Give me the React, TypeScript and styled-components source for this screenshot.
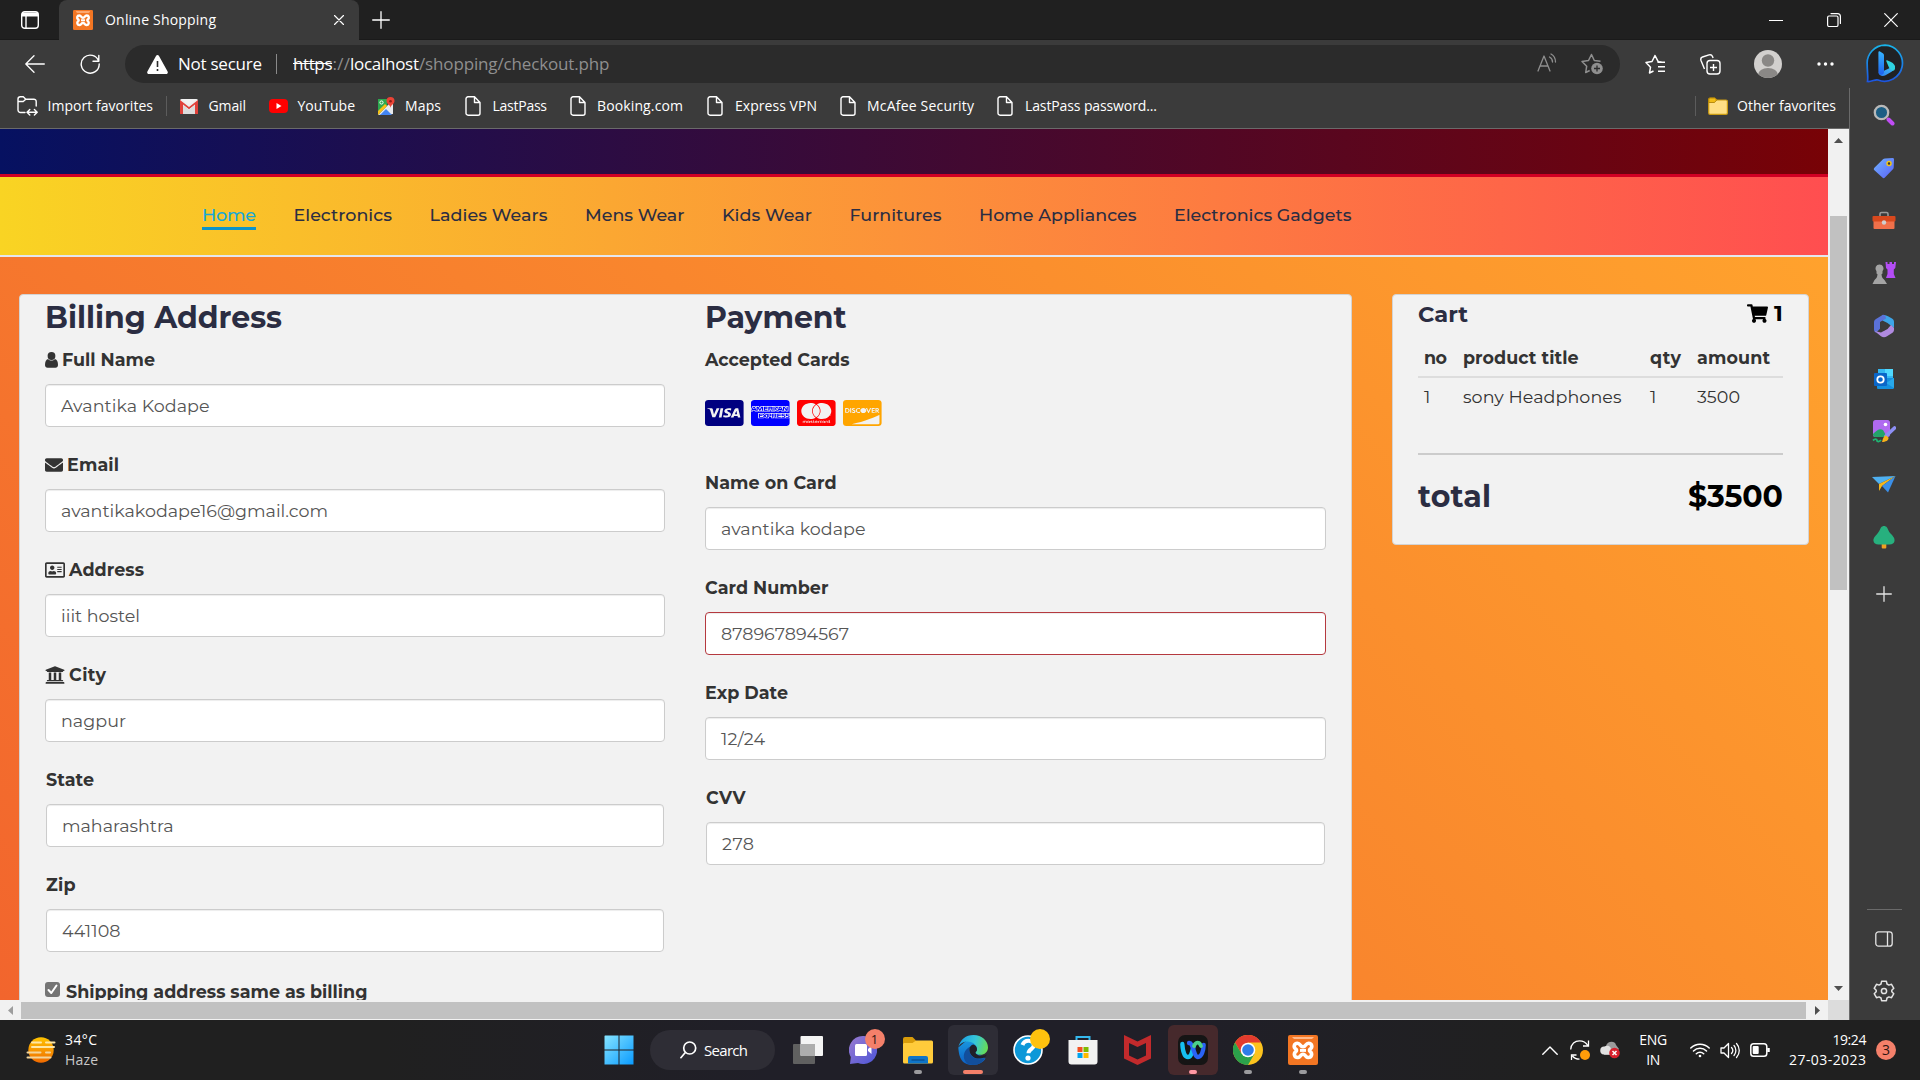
import React, { useLayoutEffect, useRef, useState } from "react";
import styled, { createGlobalStyle, css } from "styled-components";
import {
  FaCcVisa,
  FaCcAmex,
  FaCcMastercard,
  FaCcDiscover,
  FaEnvelope,
  FaRegAddressCard,
  FaUniversity,
  FaShoppingCart,
} from "react-icons/fa";

const ui = `"Segoe UI", "Open Sans", "Noto Sans", sans-serif`;
const site = `"Montserrat", Inter, "Liberation Sans", sans-serif`;

const Global = createGlobalStyle`
  *, *::before, *::after { box-sizing: border-box; }
  body { margin: 0; overflow: hidden; background: #202020; }
  svg { display: block; flex: none; }
`;

/* Text set to a given measure by tracking */
const Line = styled.span<{ $w: number }>`
  display: inline-block;
  width: ${(p) => p.$w}px;
  white-space: nowrap;
  flex: none;
`;

function Fit({ w, children }: { w: number; children: string }) {
  const ref = useRef<HTMLSpanElement>(null);
  const [tracking, setTracking] = useState(0);
  useLayoutEffect(() => {
    const range = document.createRange();
    range.selectNodeContents(ref.current!);
    const natural = range.getBoundingClientRect().width;
    setTracking((w - natural) / Math.max(1, children.length - 1));
  }, []);
  return (
    <Line ref={ref} $w={w} style={{ letterSpacing: tracking }}>
      {children}
    </Line>
  );
}

const Screen = styled.div`
  width: 1920px;
  height: 1080px;
  display: grid;
  grid-template-rows: 40px 48px 932px 60px;
  font-family: ${ui};
  color: #fff;
  background: #3b3b3b;
  overflow: hidden;
`;

/* ---------- title bar ---------- */
const TitleBar = styled.div`
  display: flex;
  align-items: center;
  background: #202020;
  box-shadow: inset 0 -1px 0 #1a1a1a;
`;
const Tab = styled.div`
  display: flex;
  align-items: center;
  width: 300px;
  height: 40px;
  margin-left: 20px;
  padding: 0 15px 0 14px;
  border-radius: 8px 8px 0 0;
  background: #3b3b3b;
  font-size: 14px;
  line-height: 20px;
`;
const TabTitle = styled.div`
  flex: 1;
  margin: 0 0 1px 12px;
`;
const LeadIcon = styled.div`
  margin-left: 21px;
`;
const NewTab = styled.div`
  margin-left: 13px;
`;
const WindowButtons = styled.div`
  display: flex;
  gap: 43.5px;
  margin-left: auto;
  padding-right: 22px;
`;

/* ---------- toolbar ---------- */
const Toolbar = styled.div`
  display: flex;
  align-items: center;
  padding: 0 15px 0 25px;
`;
const Address = styled.div`
  display: flex;
  align-items: center;
  width: 1495px;
  height: 38px;
  margin-left: 25px;
  padding: 0 17px 0 22px;
  border-radius: 19px;
  background: #2b2b2b;
  font-size: 17px;
  line-height: 24px;
`;
const Refresh = styled.div`
  margin-left: 35px;
`;
const NotSecure = styled.div`
  margin-left: 10px;
`;
const Rule = styled.div<{ $gap?: string; $tone?: string }>`
  width: 1px;
  height: 20px;
  margin: ${(p) => p.$gap || "0"};
  background: ${(p) => p.$tone || "#5c5c5c"};
`;
const Url = styled.div`
  display: flex;
  flex: 1;
  color: #8f8f8f;
`;
const Struck = styled.span`
  color: #fff;

  & > span {
    text-decoration: line-through;
  }
`;
const Host = styled.span`
  color: #fff;
`;
const AddressIcons = styled.div`
  display: flex;
  gap: 24px;
`;
const ToolIcons = styled.div`
  display: flex;
  align-items: center;
  flex: 1;
  margin-left: 25px;
`;
const Push = styled.div<{ $l: number }>`
  margin-left: ${(p) => p.$l}px;
`;

/* ---------- middle ---------- */
const Middle = styled.div`
  display: flex;
`;
const Content = styled.div`
  width: 1849px;
  display: grid;
  grid-template-rows: 41px 871px 20px;
`;
const Bookmarks = styled.div`
  display: flex;
  align-items: center;
  padding: 0 13px 4px 17px;
  border-bottom: 1px solid #6a6a6a;
  font-size: 14px;
  line-height: 20px;
`;
const Bookmark = styled.div<{ $ml?: number; $gap: number }>`
  display: flex;
  align-items: center;
  gap: ${(p) => p.$gap}px;
  margin-left: ${(p) => p.$ml || 0}px;
`;
const OtherFavorites = styled.div`
  display: flex;
  align-items: center;
  margin-left: auto;
`;

const Viewport = styled.div`
  display: flex;
`;
const Page = styled.div`
  width: 1828px;
  height: 871px;
  display: flex;
  flex-direction: column;
  overflow: hidden;
  font-family: ${site};
`;
const Masthead = styled.div`
  height: 48px;
  flex: none;
  border-bottom: 3px solid #d10024;
  background: linear-gradient(to right, #061161, #780206);
`;
const Nav = styled.nav`
  display: flex;
  gap: 37.5px;
  height: 80px;
  flex: none;
  padding: 24px 0 0 202px;
  border-bottom: 2px solid #e4e7ed;
  background: linear-gradient(to right, #f9d423, #ff4e50);
`;
const NavItem = styled.div<{ $active?: boolean }>`
  height: 29px;
  font-size: 17.5px;
  font-weight: 500;
  line-height: 28px;
  color: #2b2d42;
  ${(p) =>
    p.$active &&
    css`
      color: #15a8d8;
      border-bottom: 3px solid #0d94c8;
    `}
`;
const Section = styled.div`
  display: flex;
  flex: 1;
  align-items: flex-start;
  gap: 40px;
  min-height: 0;
  padding: 37px 19px 0;
  background: linear-gradient(45deg, #f2652d, #ffa22d);
`;
const Panel = styled.div`
  border: 1px solid #d3d3d3;
  border-radius: 4px;
  background: #f2f2f2;
  color: #333;
`;
const FormPanel = styled(Panel)`
  display: flex;
  gap: 40px;
  width: 1333px;
  height: 860px;
  padding: 2px 24px 0 25px;
`;
const Column = styled.div<{ $w: number }>`
  width: ${(p) => p.$w}px;
  flex: none;
`;
const Heading = styled.h3`
  height: 40px;
  margin: 0 0 11px;
  font-size: 30px;
  line-height: 42px;
  font-weight: 700;
  color: #2b2d42;
`;
const Field = styled.label<{ $inset?: boolean }>`
  display: block;
  height: 105px;
  padding: ${(p) => (p.$inset ? "0 1px" : "0")};
`;
const Label = styled.div<{ $gap?: number }>`
  display: flex;
  align-items: center;
  gap: ${(p) => p.$gap || 4}px;
  height: 24px;
  font-size: 17.5px;
  line-height: 24px;
  font-weight: 700;
`;
const Box = styled.div<{ $error?: boolean }>`
  height: 43px;
  margin-top: 12px;
  padding-left: 15px;
  border: 1px solid ${(p) => (p.$error ? "#b5393f" : "#ccc")};
  border-radius: 4px;
  background: #fff;
  box-shadow: inset 0 1px 1px rgba(0, 0, 0, 0.075);
  font-size: 17.5px;
  line-height: 42px;
  font-weight: 400;
  color: #555;
`;
const Brands = styled.div`
  display: flex;
  gap: 7.5px;
  height: 99px;
  padding-top: 28px;

  & > svg {
    width: 38.6px;
    height: 26px;
  }
`;
const SameAs = styled.div`
  display: flex;
  gap: 6px;
  font-size: 17.5px;
  line-height: 28px;
  font-weight: 700;
`;
const Check = styled.span`
  display: flex;
  width: 15px;
  height: 15px;
  margin-top: 4px;
  border-radius: 3px;
  background: #757575;
`;
const CartPanel = styled(Panel)`
  width: 417px;
  height: 251px;
  padding: 3px 25px 0;
`;
const CartHead = styled.div`
  display: flex;
  justify-content: space-between;
  height: 30px;
  margin-bottom: 12px;
  font-size: 22.5px;
  line-height: 32px;
  font-weight: 700;
  color: #2b2d42;
`;
const Count = styled.div`
  display: flex;
  align-items: center;
  gap: 6px;
  color: #000;
`;
const CartRow = styled.div<{ $head?: boolean }>`
  display: grid;
  grid-template-columns: 39px 187px 47px 1fr;
  padding-left: 6px;
  height: 38px;
  font-size: 17.5px;
  line-height: ${(p) => (p.$head ? 36 : 38)}px;
  font-weight: ${(p) => (p.$head ? 700 : 400)};
  ${(p) => p.$head && "border-bottom: 2px solid #ddd;"}
`;
const Total = styled.div`
  display: flex;
  justify-content: space-between;
  margin-top: 37px;
  padding-top: 21px;
  border-top: 2px solid #ccc;
  font-size: 30px;
  line-height: 42px;
  font-weight: 700;
  color: #2b2d42;
`;
const Price = styled.span`
  color: #000;
`;

const VScroll = styled.div`
  width: 21px;
  display: flex;
  flex-direction: column;
  align-items: center;
  padding: 9px 0 9px;
  background: #f1f1f1;
`;
const VThumb = styled.div`
  width: 17px;
  height: 374px;
  margin: 73px 0 auto;
  background: #c1c1c1;
`;
const HScroll = styled.div`
  display: flex;
  align-items: center;
  background: #f1f1f1;
  padding-left: 8px;
`;
const HThumb = styled.div`
  width: 1785px;
  height: 17px;
  margin: 1px 9px 0 8px;
  background: #c1c1c1;
`;
const Corner = styled.div`
  width: 21px;
  height: 20px;
  margin-left: auto;
  background: #dcdcdc;
`;
const SideBar = styled.aside`
  display: flex;
  flex-direction: column;
  align-items: center;
  width: 71px;
  padding: 1px 2px 18px 0;
  border-left: 1px solid #6a6a6a;
`;
const Slot = styled.div<{ $last?: boolean }>`
  display: grid;
  place-items: center;
  height: 52.7px;
  flex: none;
  margin-top: ${(p) => (p.$last ? 4 : 0)}px;
`;
const SideFoot = styled.div`
  display: flex;
  flex-direction: column;
  align-items: center;
  gap: 33px;
  width: 35px;
  margin-top: auto;
  padding-top: 21px;
  border-top: 1px solid #6a6a6a;
`;

/* ---------- taskbar ---------- */
const Taskbar = styled.div`
  display: grid;
  grid-template-columns: 591px 1fr 390px;
  background: linear-gradient(to right, #202020 20%, #201f28 40%, #201f28 62%, #202020 80%);
  font-size: 14px;
  line-height: 20px;
`;
const Weather = styled.div`
  display: flex;
  align-items: center;
  gap: 9px;
  padding-left: 26px;
`;
const Dim = styled.div`
  color: #c8c8c8;
`;
const Apps = styled.div`
  display: flex;
  align-items: center;
`;
const AppTile = styled.div<{ $bg?: string }>`
  position: relative;
  display: grid;
  place-items: center;
  width: 50px;
  height: 50px;
  margin: 0 2.5px;
  border-radius: 6px;
  background: ${(p) => p.$bg || "transparent"};
`;
const Dot = styled.span<{ $w: number; $c: string }>`
  position: absolute;
  bottom: 1px;
  left: 50%;
  width: ${(p) => p.$w}px;
  height: 4px;
  margin-left: ${(p) => -p.$w / 2}px;
  border-radius: 2px;
  background: ${(p) => p.$c};
`;
const Badge = styled.span<{ $c: string }>`
  position: absolute;
  top: 4px;
  right: 3px;
  width: 20px;
  height: 20px;
  border-radius: 50%;
  background: ${(p) => p.$c};
  color: #2a1512;
  font-size: 13px;
  line-height: 20px;
  text-align: center;
`;
const Search = styled.div`
  display: flex;
  align-items: center;
  gap: 7px;
  width: 125px;
  height: 40px;
  margin: 0 5px 0 4px;
  padding-left: 30px;
  border-radius: 20px;
  background: #2e2d35;
  font-size: 15px;
`;
const Tray = styled.div`
  display: flex;
  align-items: center;
  padding-left: 12px;
`;
const Stack = styled.div<{ $w: number; $align: string }>`
  width: ${(p) => p.$w}px;
  text-align: ${(p) => p.$align};
`;
const Notice = styled.div`
  width: 20px;
  height: 20px;
  margin-left: 10px;
  border-radius: 50%;
  background: #f4806a;
  color: #2a1512;
  text-align: center;
  line-height: 20px;
`;

/* ---------- icons ---------- */
const Stroke = ({ w, h, d, sw = 1.5, c = "#fff", vb }: { w: number; h: number; d: string; sw?: number; c?: string; vb?: string }) => (
  <svg width={w} height={h} viewBox={vb || `0 0 ${w} ${h}`} fill="none" stroke={c} strokeWidth={sw} strokeLinecap="round" strokeLinejoin="round">
    <path d={d} />
  </svg>
);

const Xampp = ({ s }: { s: number }) => (
  <svg width={s} height={s} viewBox="0 0 30 30">
    <rect width="30" height="30" rx="2" fill="#f37623" />
    <path d="M4 2h22l-2 2H6z" fill="#ffb98a" />
    <path
      d="M9.500 8.200c-3.500 0-4.500 4-1.500 6 .7.500.7 1.600 0 2.200-3 2.500-1.500 6.300 2 6.100 2.500-.2 2.500-3.200 5-3.200s2.500 3 5 3.200c3.500.2 5-3.600 2-6.100-.7-.6-.7-1.700 0-2.200 3-2 2-6-1.500-6-3 0-2.500 3.500-5.500 3.500s-2.500-3.500-5.500-3.500z"
      fill="none" stroke="#fff" strokeWidth="3.600" strokeLinejoin="round"
    />
    <path d="M12 15.400h6" stroke="#fff" strokeWidth="3" />
  </svg>
);
const PageIcon = () => <Stroke w={16} h={20} sw={1.4} d="M3 .8h6.500l5.500 5.700v10.700a2 2 0 0 1-2 2H3a2 2 0 0 1-2-2V2.800a2 2 0 0 1 2-2zM9.500 1v5.500H15" />;
const Gmail = () => (
  <svg width="18" height="15" viewBox="0 0 18 15">
    <rect width="18" height="15" rx="1.500" fill="#eee" />
    <path d="M0 15V1l9 7 9-7v14h-3V5.500l-6 4.800-6-4.800V15z" fill="#e0413a" />
    <path d="M3 15V6l6 4.800L15 6v9z" fill="#dcdcdc" />
    <path d="M1.500 0h15L9 5.800z" fill="#f2f2f2" />
  </svg>
);
const YouTube = () => (
  <svg width="19" height="14" viewBox="0 0 19 14">
    <rect width="19" height="14" rx="4" fill="#f00" />
    <path d="M7.500 4v6l5-3z" fill="#fff" />
  </svg>
);
const Maps = () => (
  <svg width="18" height="19" viewBox="0 0 18 19">
    <path d="M1 2h10l-1 7-9 9z" fill="#2da94f" />
    <path d="M1 18 16 3v14z" fill="#e8eaed" />
    <path d="M3 18l6-6 6 6z" fill="#4285f4" />
    <path d="M1 14v4l9-9-2-2z" fill="#fbc116" />
    <circle cx="4.500" cy="5.500" r="1.600" fill="none" stroke="#fff" />
    <path d="M13.500 11c0-3-4-4-4-7a4 4 0 0 1 8 0c0 3-4 4-4 7z" fill="#ea4335" />
    <circle cx="13.500" cy="4.200" r="1.300" fill="#8c1d18" />
  </svg>
);
const Folder = () => (
  <svg width="20" height="18" viewBox="0 0 20 18">
    <path d="M.7 2.500A1.500 1.500 0 0 1 2.200 1h4.300l2.200 2H18a1.400 1.400 0 0 1 1.400 1.400V16a1.300 1.300 0 0 1-1.300 1.300H2A1.300 1.300 0 0 1 .7 16z" fill="#ffdf85" stroke="#c99a12" strokeWidth="1.200" />
    <path d="M.8 5.500V2.500A1.400 1.400 0 0 1 2.200 1h4.300l2.200 2L6.500 5.500z" fill="#f2bd18" stroke="#a87b00" strokeWidth=".8" />
  </svg>
);
const Bing = () => (
  <svg width="38" height="40" viewBox="0 0 38 40">
    <defs>
      <linearGradient id="bo" x1="0" y1="0" x2="0" y2="1">
        <stop offset="0" stopColor="#18b4ea" />
        <stop offset="1" stopColor="#1d55e0" />
      </linearGradient>
      <linearGradient id="bb" x1="0" y1="0" x2="0" y2="1">
        <stop offset="0" stopColor="#35b4ff" />
        <stop offset="1" stopColor="#1f62ee" />
      </linearGradient>
      <linearGradient id="bc" x1="0" y1="1" x2="1" y2="0">
        <stop offset="0" stopColor="#2a7df5" />
        <stop offset="1" stopColor="#45c8f5" />
      </linearGradient>
    </defs>
    <path d="M19 1.200a18 18 0 1 1-7 34.800c-3-1-6 2-10.500 1.500.8-4-.3-9-.3-17A18 18 0 0 1 19 1.200z" fill="#202124" stroke="url(#bo)" strokeWidth="1.700" />
    <path d="M12.500 28.500c.3 3 4 4.300 7 2.700l6-3.500c2.500-1.600 3.500-3.700 3.500-6.200l-11.500 5.500z" fill="url(#bc)" />
    <path d="M21 16.200l3.500 1.600c3.500 1.600 5 4 4.500 7-.3 1.500-1.500 2.500-3 1.800L24.500 25c-.8-.4-1.200-.8-1.500-1.600l-2.600-6c-.3-.8 0-1.400.6-1.200z" fill="#2fd3e0" />
    <path d="M12.400 8.300c0-1.100.8-1.400 1.600-.9l2.800 1.900c.9.600 1.200 1.100 1.200 2.100V28c0 1.500-1.200 2.700-2.800 2.700s-2.800-1.200-2.800-2.700z" fill="url(#bb)" />
  </svg>
);
const Profile = () => (
  <svg width="28" height="28" viewBox="0 0 28 28">
    <clipPath id="pc"><circle cx="14" cy="14" r="14" /></clipPath>
    <g clipPath="url(#pc)">
      <rect width="28" height="28" fill="#d2d0ce" />
      <circle cx="14" cy="10.500" r="6.200" fill="#8a8886" />
      <ellipse cx="14" cy="25" rx="10" ry="7" fill="#8a8886" />
    </g>
  </svg>
);
const ReadAloud = () => <Stroke w={20} h={20} c="#8f8f8f" sw={1.300} d="M1 18 7 3l6 15M3.200 13h7.600M12.500 4c2 1 3 3 3 5M14 1c3.500 2 4.500 5 4.500 8" />;
const starD = "M16.500 8.200 13.200 7.700 10 1.500 7 7.500 1 8.500l4.500 4.700L4.500 19l4-2";
const AddStar = () => (
  <svg width="22" height="22" viewBox="0 0 22 22" fill="none" stroke="#8f8f8f" strokeWidth="1.500" strokeLinejoin="round">
    <path d="M19.500 8.200 13.300 7.500 10.500 1.500 7.500 7.500 1 8.500l4.700 4.700L4.700 19.500l4-2" />
    <circle cx="16" cy="15.500" r="5.800" fill="#8f8f8f" stroke="none" />
    <path d="M16 12.500v6M13 15.500h6" stroke="#2b2b2b" strokeWidth="1.300" />
  </svg>
);

const SearchEmoji = () => (
  <svg width="22" height="22" viewBox="0 0 22 22">
    <path d="m15.500 15.500 4 4" stroke="#c04df5" strokeWidth="4" strokeLinecap="round" />
    <circle cx="8.500" cy="8.500" r="6.700" fill="#1c5e84" stroke="#b9b9b9" strokeWidth="2.300" />
  </svg>
);
const Tag = () => (
  <svg width="22" height="22" viewBox="0 0 22 22">
    <defs><linearGradient id="tg" x1="0" y1="0" x2="1" y2="1"><stop offset="0" stopColor="#70b4ff" /><stop offset="1" stopColor="#5b60f5" /></linearGradient></defs>
    <path d="M12 1.500 19.500 1c1 0 1.500.5 1.500 1.500l-.3 8c0 .8-.3 1.300-.8 1.800l-8 8.300c-.8.800-1.700.800-2.500 0L1.400 13.300c-.8-.8-.8-1.800 0-2.600L10 2.300c.5-.5 1.200-.8 2-.8z" fill="url(#tg)" />
    <circle cx="16" cy="6.500" r="2" fill="#333" stroke="#f3c416" strokeWidth="1.500" />
  </svg>
);
const Toolbox = () => (
  <svg width="24" height="19" viewBox="0 0 24 19">
    <path d="M8 6V3c0-1 .5-1.500 1.500-1.500h5c1 0 1.500.5 1.500 1.500v3" fill="none" stroke="#999" strokeWidth="1.600" />
    <rect x="1.500" y="9" width="21" height="9" rx="1" fill="#f0704a" />
    <rect x=".5" y="5" width="23" height="5.500" rx="1" fill="#d8481d" />
    <circle cx="12" cy="11.500" r="2.200" fill="#cfcfcf" />
  </svg>
);
const Chess = () => (
  <svg width="24" height="24" viewBox="0 0 24 24">
    <path d="M13.500 1h2v2h2V1h2.500v2h2V1H24l-.7 6-1.500 1.500V13l1.700 4h-9.500l1.500-4V8.500L14 7z" fill="#b44df5" />
    <path d="M7.500 3.500a4 4 0 0 1 3 6.700v2.300l-1 .8c.3 3 1 4.200 3 5.700L15 23H.5l2-4c2-1.500 2.700-2.700 3-5.700l-1-.8v-2.300a4 4 0 0 1 3-6.700z" fill="#a4a4a4" />
  </svg>
);
const M365 = () => (
  <svg width="22" height="24" viewBox="0 0 22 24">
    <path d="M9 1.500C11 .3 13 1 15 2.200l4 2.300c1.500 1 2 2 2 3.500v6L14.500 9l-5-2.500z" fill="#3da5e8" />
    <path d="M9.500 1 3 5C1.500 6 1 7 1 8.500v7c0 1.500.8 2.500 2 3.200l4-4V8l6-3.500C13 2 11 .2 9.500 1z" fill="#5b72d8" />
    <path d="M1.500 17 8 22.200c2 1.300 4 1.300 6 0l5.500-3.500c1.300-1 1.700-2 1.500-4.700l-3-3-3.500 4-6.500 3.500z" fill="#b08ae0" />
    <path d="m11 8 3.700 2v4.300L11 16.500l-3.700-2.200V10z" fill="#3b3b3b" />
  </svg>
);
const Outlook = () => (
  <svg width="22" height="22" viewBox="0 0 22 22">
    <rect x="5" y="1" width="15" height="14" fill="#35b8f1" />
    <path d="M12 1h8v7h-8z" fill="#50d9ff" />
    <path d="M4 10h17v9.500c0 .8-.5 1.500-1.300 1.500H5.300c-.8 0-1.300-.5-1.300-1.500z" fill="#1490df" />
    <path d="M21 10v10l-8-5z" fill="#28a8ea" />
    <rect x="1" y="5" width="13" height="13" rx="1" fill="#0a66c8" />
    <circle cx="7.500" cy="11.500" r="3.200" fill="none" stroke="#fff" strokeWidth="1.800" />
  </svg>
);
const Designer = () => (
  <svg width="24" height="24" viewBox="0 0 24 24">
    <rect x="1" y="1" width="17" height="17" rx="2.500" fill="#b06af0" />
    <path d="M1 15c4-4 7-6 10-4l4 7H3.500A2.500 2.500 0 0 1 1 16z" fill="#23a36a" />
    <circle cx="13.500" cy="5.500" r="1.800" fill="#fff" />
    <path d="M14 17 22.500 9" stroke="#8d8ff5" strokeWidth="3.600" strokeLinecap="round" />
    <path d="M10 23c1-3 1.500-6 4-6.500l2.500 2c.5 3-3 4.500-6.500 4.500z" fill="#f7b11b" />
    <path d="M1 21.500c2-2 4-1.500 4 0s2.500 1.500 4-.5" fill="none" stroke="#1fb573" strokeWidth="1.800" />
  </svg>
);
const Plane = () => (
  <svg width="24" height="18" viewBox="0 0 24 18">
    <path d="M0 2 23.500 1 7 9z" fill="#4fb0f0" />
    <path d="M7 9 23.500 1 10 11l-3 5z" fill="#f5b71c" />
    <path d="M10 11 23.500 1 16 17.500z" fill="#3b8fe8" />
  </svg>
);
const Tree = () => (
  <svg width="22" height="24" viewBox="0 0 22 24">
    <rect x="8.700" y="18" width="4.600" height="5.500" rx="1" fill="#f0a020" />
    <path d="M8 2.500c1.500-2 4.500-2 6 0 1 1.500 1.500 4 3.500 6S22 13 21.500 16c-.3 2-2 3.500-5 3.500h-11c-3 0-4.700-1.500-5-3.500C0 13 2.500 11 4.500 8.500s2.500-4.500 3.500-6z" fill="#27b07e" />
  </svg>
);
const Gear = () => (
  <svg width="22" height="22" viewBox="0 0 22 22" fill="none" stroke="#e4e4e4" strokeWidth="1.500" strokeLinejoin="round">
    <path d="M8.600 1.300h4.800l.6 2.700 1.900 1.100 2.600-.8 2.300 4-2 1.900v1.600l2 1.900-2.300 4-2.600-.8L14 18l-.6 2.700H8.600L8 18l-1.900-1.100-2.600.8-2.300-4 2-1.900v-1.600l-2-1.900 2.300-4 2.600.8L8 4z" />
    <circle cx="11" cy="11" r="2.600" />
  </svg>
);
const Edge = () => (
  <svg width="30" height="30" viewBox="0 0 30 30">
    <defs>
      <linearGradient id="e1" x1="0" y1=".3" x2="1" y2=".5"><stop offset="0" stopColor="#1a9fe8" /><stop offset=".55" stopColor="#36c6d8" /><stop offset="1" stopColor="#66dd56" /></linearGradient>
      <linearGradient id="e2" x1="0" y1="0" x2="0" y2="1"><stop offset="0" stopColor="#1b9de2" /><stop offset="1" stopColor="#0c5fc4" /></linearGradient>
    </defs>
    <path d="M.3 12.500C1 20 2 30 15 30c6 0 10.500-3 12.500-6.500L17.500 17l4-8-10-6z" fill="url(#e2)" />
    <path d="M.3 12.500C2 4.500 8 0 15.500 0 24 0 30 6 30 12.500c0 4.500-3.500 7.300-7.500 7.300-3.200 0-5.200-1.200-5-2.300.2-.7 1.500-1.200 1.500-3.500C19 9.500 14 6.500 9.500 6.500 5 6.500 1.500 9 .3 12.500z" fill="url(#e1)" />
    <path d="M11 29.500C6 27 4.500 21 7 16.500c1-2 3-4 5.500-5-1.500 2-1.500 5 0 8 2.500 4.500 9 6 14.800 3.300C25 27 21 30 15 30c-1.500 0-2.700-.2-4-.5z" fill="#124f9c" />
    <path d="M17.500 17.500c.2-.7 1.500-1.200 1.500-3.500a5 5 0 0 0-3.500-4.500c-3 .5-4.500 3.500-4 6.500.5 4 4 7 8 7.500 3 .2 5.500-.3 7.700-1.500l1.800-2.500c-4 2.300-11.500 1-11.500-2z" fill="#201f28" />
  </svg>
);
const Chrome = () => (
  <svg width="30" height="30" viewBox="0 0 30 30">
    <circle cx="15" cy="15" r="15" fill="#fcc31e" />
    <path d="M2 7.500A15 15 0 0 1 28 7.500H15L8.500 18.800z" fill="#e33b2e" />
    <path d="M2 7.500A15 15 0 0 0 15 30l6.500-11.200H8.500z" fill="#2ba14b" />
    <circle cx="15" cy="15" r="7.300" fill="#fff" />
    <circle cx="15" cy="15" r="5.800" fill="#2f7de9" />
  </svg>
);
const Explorer = () => (
  <svg width="30" height="27" viewBox="0 0 30 27">
    <path d="M0 2a2 2 0 0 1 2-2h7.500l3.500 3.500V9H0z" fill="#d99c0a" />
    <path d="M1 6h8.500L13 3.500h15.500A1.500 1.500 0 0 1 30 5v20a1.500 1.500 0 0 1-1.500 1.500h-27A1.500 1.500 0 0 1 0 25V7z" fill="#ffcb3b" />
    <path d="M5 26.500V21a2 2 0 0 1 2-2h16a2 2 0 0 1 2 2v5.500z" fill="#0f75c8" />
    <path d="M8.500 23h13" stroke="#0a4e8d" strokeWidth="1.300" />
  </svg>
);
const Store = () => (
  <svg width="30" height="30" viewBox="0 0 30 30">
    <path d="M8.500 7V2h13v5" fill="none" stroke="#35b9ee" strokeWidth="2" />
    <path d="M.5 5h29v21.500a3 3 0 0 1-3 3h-23a3 3 0 0 1-3-3z" fill="#f2f2f2" />
    <path d="M9.500 12h5v5h-5z" fill="#f25022" /><path d="M15.500 12h5v5h-5z" fill="#7fba00" />
    <path d="M9.500 18h5v5h-5z" fill="#00a4ef" /><path d="M15.500 18h5v5h-5z" fill="#ffb900" />
  </svg>
);
const Mcafee = () => (
  <svg width="27" height="30" viewBox="0 0 27 30">
    <path d="m0 0 13.500 6.500L27 0v23.500L13.500 30 0 23.500zm5 8v12.500l8.500 4 8.500-4V8l-8.500 4z" fill="#c22a2c" fillRule="evenodd" />
  </svg>
);
const Webex = () => (
  <svg width="30" height="30" viewBox="0 0 30 30" fill="none">
    <rect width="30" height="30" rx="7" fill="#151515" />
    <path d="M4.300 9c.5 8 2.500 13 5.700 13 3.500 0 4-6 5.500-10" stroke="#16bff0" strokeWidth="4.300" strokeLinecap="round" />
    <path d="M11 8c4.500-.5 4.500 14 9 14 3.500 0 5.500-6 5.700-12" stroke="#2a63f5" strokeWidth="4.300" strokeLinecap="round" />
    <path d="M16 11c1-2.500 3-4 5-3 1.200.7 1.500 2 2 3" stroke="#4bd08a" strokeWidth="3.800" strokeLinecap="round" />
  </svg>
);
const Windows = () => (
  <svg width="30" height="30" viewBox="0 0 30 30">
    <defs><linearGradient id="wn" x1="0" y1="0" x2="1" y2="1"><stop offset="0" stopColor="#86e4ff" /><stop offset="1" stopColor="#0a9bff" /></linearGradient></defs>
    <path d="M1 .5h13.500v14H.5V1zM15.500.5h14v14h-14zM.5 15.500h14v14H.5zM15.500 15.500h14v14h-14z" fill="url(#wn)" />
  </svg>
);
const TaskView = () => (
  <svg width="30" height="28" viewBox="0 0 30 28">
    <rect y="8" width="22" height="20" rx="1" fill="#606060" />
    <rect x="7.500" width="22.500" height="20" rx="1" fill="#f4f4f4" />
    <path d="M7.500 8H22v12H8.500a1 1 0 0 1-1-1z" fill="#adadad" />
  </svg>
);
const Chat = () => (
  <svg width="28" height="28" viewBox="0 0 28 28">
    <defs><linearGradient id="ch" x1="0" y1="0" x2="1" y2="1"><stop offset="0" stopColor="#9a7bd0" /><stop offset="1" stopColor="#4c55d8" /></linearGradient></defs>
    <path d="M14 0a14 14 0 1 1-5 27L1 28l.8-7A14 14 0 0 1 14 0z" fill="url(#ch)" />
    <rect x="6" y="8" width="12" height="12" rx="1.500" fill="#fff" />
    <path d="m19 13 3.500-3v8L19 15z" fill="#fff" />
  </svg>
);
const HelpIcon = () => (
  <svg width="30" height="30" viewBox="0 0 30 30" fill="none">
    <circle cx="15" cy="15" r="14" fill="#0d98d8" stroke="#fff" strokeWidth="1.600" />
    <path d="M9.500 10c1-3 3-4.200 6-4.200 3.200 0 5.300 1.700 5.300 4.500 0 4-5.300 3.700-5.300 8" stroke="#fff" strokeWidth="4" />
    <circle cx="15" cy="23" r="2.600" fill="#fff" />
  </svg>
);
const Haze = () => (
  <svg width="30" height="30" viewBox="0 0 30 30" strokeLinecap="round">
    <defs><linearGradient id="hz" x1="0" y1="0" x2="0" y2="1"><stop offset="0" stopColor="#ffc400" /><stop offset="1" stopColor="#f06a00" /></linearGradient></defs>
    <circle cx="15" cy="15" r="12.700" fill="url(#hz)" />
    <path d="M6 7.500h9M20 7.500h8.500M6 12h22" stroke="#ffe7a3" strokeWidth="2" />
    <path d="M1.500 17.500h13M20 17.500h4M1.500 22.500h23" stroke="#f3d49a" strokeWidth="2" />
  </svg>
);
const Sync = () => (
  <svg width="20" height="20" viewBox="0 0 20 20" fill="none" stroke="#fff" strokeWidth="1.300">
    <path d="M.7 9.500C1 4 5 .8 9.500.8c4 0 6.500 1.700 8.300 4.700M18.500.5v5.500H13M1.500 20v-5h5M2.500 16c1.500 2 3.500 3.200 7 3.200" />
    <circle cx="15" cy="15" r="5" fill="#ff9d0a" stroke="none" />
  </svg>
);
const CloudError = () => (
  <svg width="20" height="18" viewBox="0 0 20 18">
    <path d="M6 5c1-5 9-6 10-1l3 4-6 6H4z" fill="#9b9b9b" />
    <path d="M4 13.500a4 4 0 0 1 .5-8c2-1.500 5-1 6 1l2 7z" fill="#e2e2e2" />
    <circle cx="14.500" cy="12" r="5.300" fill="#d8202c" />
    <path d="m12.500 10 4 4m0-4-4 4" stroke="#fff" strokeWidth="1.500" />
  </svg>
);
const Battery = () => (
  <svg width="20" height="14" viewBox="0 0 20 14" fill="none">
    <rect x=".8" y=".8" width="16" height="12.400" rx="2.800" stroke="#fff" strokeWidth="1.500" />
    <rect x="2.700" y="3" width="6" height="8" rx="1" fill="#fff" />
    <path d="M18.500 5v4" stroke="#fff" strokeWidth="2.500" />
  </svg>
);
const Person = () => (
  <svg width="13" height="16" viewBox="0 0 13 16" fill="#333">
    <circle cx="6.500" cy="4" r="3.900" />
    <path d="M3 7c2 2 5 2 7 0 2 .3 3 3 3 6 0 1.500-1 2.700-2.500 2.700h-8C1 15.700 0 14.500 0 13c0-3 1-5.700 3-6z" />
  </svg>
);
const cardBox = { viewBox: "0 32 576 448", preserveAspectRatio: "none" };

interface FieldProps { label: string; lw: number; value: string; vw: number; icon?: React.ReactNode; gap?: number; inset?: boolean; error?: boolean }
const TextField = ({ label, lw, value, vw, icon, gap, inset, error }: FieldProps) => (
  <Field $inset={inset}>
    <Label $gap={gap}>{icon}<Fit w={lw}>{label}</Fit></Label>
    <Box $error={error}><Fit w={vw}>{value}</Fit></Box>
  </Field>
);

const navItems: [string, number][] = [
  ["Home", 54], ["Electronics", 98.500], ["Ladies Wears", 118], ["Mens Wear", 99.500], ["Kids Wear", 90],
  ["Furnitures", 92], ["Home Appliances", 157.500], ["Electronics Gadgets", 177.500],
];
const sideIcons = [SearchEmoji, Tag, Toolbox, Chess, M365, Outlook, Designer, Plane, Tree];

export default function App() {
  return (
    <Screen>
      <Global />
      <TitleBar>
        <LeadIcon>
          <svg width="18" height="18" viewBox="0 0 18 18" fill="none" stroke="#fff" strokeWidth="1.400">
            <rect x=".7" y=".7" width="16.600" height="16.600" rx="3" />
            <path d="M1 3.500h16" strokeWidth="4" /><path d="M5 5v12" />
          </svg>
        </LeadIcon>
        <Tab>
          <Xampp s={20} />
          <TabTitle><Fit w={111}>Online Shopping</Fit></TabTitle>
          <Stroke w={10} h={10} sw={1.200} d="M.5.500l9 9m0-9-9 9" />
        </Tab>
        <NewTab><Stroke w={18} h={18} sw={1.300} d="M9 .7v16.600M.7 9h16.600" /></NewTab>
        <WindowButtons>
          <Stroke w={14} h={14} sw={1.200} d="M.5 7.500h13" />
          <Stroke w={14} h={14} sw={1.200} d="M2 3h7.500a1.500 1.500 0 0 1 1.500 1.500V12a1.500 1.500 0 0 1-1.500 1.500H2A1.500 1.500 0 0 1 .6 12V4.500A1.500 1.500 0 0 1 2 3zM4 .6h6.500c1.700 0 2.900 1.200 2.900 3V10.500" />
          <Stroke w={14} h={14} sw={1.200} d="M.7.700l12.600 12.600m0-12.600L.7 13.300" />
        </WindowButtons>
      </TitleBar>

      <Toolbar>
        <Stroke w={20} h={18} sw={1.300} d="M19.300 9H.8M9 .8.8 9 9 17.200" />
        <Refresh><Stroke w={20} h={20} sw={1.400} d="M18.700 7.200A9 9 0 1 0 19.200 10M18.800 1.500v5.700H13" /></Refresh>
        <Address>
          <svg width="21" height="19" viewBox="0 0 21 19">
            <path d="M9 1c.6-1.200 2.400-1.200 3 0l8.600 15.500c.6 1.200 0 2.500-1.400 2.500H1.800C.4 19-.2 17.700.4 16.500z" fill="#fff" />
            <path d="M10.500 6v6M10.500 14v2" stroke="#2b2b2b" strokeWidth="1.600" />
          </svg>
          <NotSecure><Fit w={84}>Not secure</Fit></NotSecure>
          <Rule $gap="0 16px 0 14px" $tone="#8a8a8a" />
          <Url>
            <Struck><Fit w={39.500}>https</Fit></Struck>
            <Fit w={17.500}>://</Fit>
            <Host><Fit w={69}>localhost</Fit></Host>
            <Fit w={190.500}>/shopping/checkout.php</Fit>
          </Url>
          <AddressIcons><ReadAloud /><AddStar /></AddressIcons>
        </Address>
        <ToolIcons>
          <svg width="21" height="20" viewBox="0 0 21 20" fill="none" stroke="#fff" strokeWidth="1.500" strokeLinejoin="round">
            <path d={starD} /><path d="M12.500 8.200H20M13 12.700h7M13 17.200h7" />
          </svg>
          <Push $l={34}>
            <svg width="21" height="21" viewBox="0 0 21 21" fill="none" stroke="#fff" strokeWidth="1.400">
              <rect x="7" y="6.500" width="13" height="13.500" rx="3" /><path d="M13.500 10v7M10 13.500h7" />
              <path d="M4.500 15 1 6.500c-.5-1.500 0-3 1.500-3.500L9 .9c1.500-.4 3 .3 3.500 1.600l.6 1.500" />
            </svg>
          </Push>
          <Push $l={33}><Profile /></Push>
          <Push $l={35}>
            <svg width="17" height="4" viewBox="0 0 17 4" fill="#fff"><circle cx="2" cy="2" r="1.700" /><circle cx="8.500" cy="2" r="1.700" /><circle cx="15" cy="2" r="1.700" /></svg>
          </Push>
          <Push $l={32}><Bing /></Push>
        </ToolIcons>
      </Toolbar>

      <Middle>
        <Content>
          <Bookmarks>
            <Bookmark $gap={9.500}>
              <Stroke w={21} h={20} sw={1.400} d="M8 16.500H3.500A2.500 2.500 0 0 1 1 14V3A2.300 2.300 0 0 1 3.300.8h3l2.500 2.400h8A2.300 2.300 0 0 1 19.200 5.500V10M1.200 5.500h5l2.600-2.300M10.500 16.200h9M12.800 13.500l-2.800 2.700 2.800 2.800M17.400 13.500l2.800 2.700-2.800 2.800" />
              <Fit w={105.500}>Import favorites</Fit>
            </Bookmark>
            <Rule $gap="0 0 0 13px" />
            <Bookmark $ml={13} $gap={10.500}><Gmail /><Fit w={37.500}>Gmail</Fit></Bookmark>
            <Bookmark $ml={23} $gap={9.500}><YouTube /><Fit w={57.500}>YouTube</Fit></Bookmark>
            <Bookmark $ml={22} $gap={10}><Maps /><Fit w={36}>Maps</Fit></Bookmark>
            <Bookmark $ml={24} $gap={11.500}><PageIcon /><Fit w={54.500}>LastPass</Fit></Bookmark>
            <Bookmark $ml={23} $gap={11}><PageIcon /><Fit w={86}>Booking.com</Fit></Bookmark>
            <Bookmark $ml={24} $gap={12}><PageIcon /><Fit w={82}>Express VPN</Fit></Bookmark>
            <Bookmark $ml={23} $gap={11}><PageIcon /><Fit w={107}>McAfee Security</Fit></Bookmark>
            <Bookmark $ml={23} $gap={12}><PageIcon /><Fit w={132}>LastPass password...</Fit></Bookmark>
            <OtherFavorites>
              <Rule $gap="0 12px 0 0" />
              <Bookmark $gap={9}><Folder /><Fit w={99}>Other favorites</Fit></Bookmark>
            </OtherFavorites>
          </Bookmarks>

          <Viewport>
            <Page>
              <Masthead />
              <Nav>
                {navItems.map(([t, w], i) => <NavItem key={t} $active={i === 0}><Fit w={w}>{t}</Fit></NavItem>)}
              </Nav>
              <Section>
                <FormPanel>
                  <Column $w={620}>
                    <Heading><Fit w={237}>Billing Address</Fit></Heading>
                    <TextField label="Full Name" lw={93} value="Avantika Kodape" vw={148.500} icon={<Person />} gap={4} />
                    <TextField label="Email" lw={52} value="avantikakodape16@gmail.com" vw={267} icon={<FaEnvelope size={18} />} gap={4} />
                    <TextField label="Address" lw={75} value="iiit hostel" vw={79} icon={<FaRegAddressCard size={20} />} gap={4} />
                    <TextField label="City" lw={37} value="nagpur" vw={65} icon={<FaUniversity size={20} />} gap={4} />
                    <TextField label="State" lw={48} value="maharashtra" vw={111.500} inset />
                    <TextField label="Zip" lw={29.500} value="441108" vw={58.500} inset />
                    <SameAs>
                      <Check><Stroke w={15} h={15} sw={2} d="M3.500 8 6.300 11 11.500 3.500" /></Check>
                      <Fit w={301.500}>Shipping address same as billing</Fit>
                    </SameAs>
                  </Column>
                  <Column $w={621}>
                    <Heading><Fit w={141.500}>Payment</Fit></Heading>
                    <Label><Fit w={144.500}>Accepted Cards</Fit></Label>
                    <Brands>
                      <FaCcVisa {...cardBox} color="navy" />
                      <FaCcAmex {...cardBox} color="blue" />
                      <FaCcMastercard {...cardBox} color="red" />
                      <FaCcDiscover {...cardBox} color="orange" />
                    </Brands>
                    <TextField label="Name on Card" lw={131.500} value="avantika kodape" vw={144.500} />
                    <TextField label="Card Number" lw={123.500} value="878967894567" vw={128} error />
                    <TextField label="Exp Date" lw={83} value="12/24" vw={44} />
                    <TextField label="CVV" lw={39.500} value="278" vw={32} inset />
                  </Column>
                </FormPanel>
                <CartPanel>
                  <CartHead>
                    <Fit w={50}>Cart</Fit>
                    <Count><FaShoppingCart size={21} /><Fit w={9}>1</Fit></Count>
                  </CartHead>
                  <CartRow $head>
                    <Fit w={23}>no</Fit><Fit w={115.500}>product title</Fit><Fit w={31}>qty</Fit><Fit w={73}>amount</Fit>
                  </CartRow>
                  <CartRow>
                    <Fit w={8}>1</Fit><Fit w={158.500}>sony Headphones</Fit><Fit w={8}>1</Fit><Fit w={43}>3500</Fit>
                  </CartRow>
                  <Total>
                    <Fit w={73}>total</Fit>
                    <Price><Fit w={95}>$3500</Fit></Price>
                  </Total>
                </CartPanel>
              </Section>
            </Page>
            <VScroll>
              <svg width="9" height="5" viewBox="0 0 9 5"><path d="M4.500 0 9 5H0z" fill="#4f4f4f" /></svg>
              <VThumb />
              <svg width="9" height="5" viewBox="0 0 9 5"><path d="M4.500 5 9 0H0z" fill="#4f4f4f" /></svg>
            </VScroll>
          </Viewport>

          <HScroll>
            <svg width="5" height="9" viewBox="0 0 5 9"><path d="M0 4.500 5 0v9z" fill="#9d9d9d" /></svg>
            <HThumb />
            <svg width="5" height="9" viewBox="0 0 5 9"><path d="M5 4.500 0 0v9z" fill="#4f4f4f" /></svg>
            <Corner />
          </HScroll>
        </Content>

        <SideBar>
          {sideIcons.map((I, i) => <Slot key={i}><I /></Slot>)}
          <Slot $last><Stroke w={16} h={16} sw={1.300} c="#e4e4e4" d="M8 .7v14.600M.7 8h14.600" /></Slot>
          <SideFoot>
            <Stroke w={18} h={16} sw={1.300} c="#e4e4e4" d="M3.500.8h11a2.700 2.700 0 0 1 2.700 2.700v9a2.700 2.700 0 0 1-2.700 2.700h-11A2.700 2.700 0 0 1 .8 12.500v-9A2.700 2.700 0 0 1 3.500.8zM12.500 1v14" />
            <Gear />
          </SideFoot>
        </SideBar>
      </Middle>

      <Taskbar>
        <Weather>
          <Haze />
          <div>
            <div><Fit w={32}>34°C</Fit></div>
            <Dim><Fit w={33}>Haze</Fit></Dim>
          </div>
        </Weather>
        <Apps>
          <AppTile><Windows /></AppTile>
          <Search>
            <Stroke w={17} h={18} sw={1.700} d="M15.700 7a6 6 0 1 1-12 0 6 6 0 0 1 12 0zM5.500 11.300.9 16.700" />
            <Fit w={44}>Search</Fit>
          </Search>
          <AppTile><TaskView /></AppTile>
          <AppTile><Chat /><Badge $c="#f4806a">1</Badge></AppTile>
          <AppTile><Explorer /><Dot $w={8} $c="#9b9b9e" /></AppTile>
          <AppTile $bg="#2e2d36"><Edge /><Dot $w={20} $c="#f4806a" /></AppTile>
          <AppTile><HelpIcon /><Badge $c="#ffc20e" /></AppTile>
          <AppTile><Store /></AppTile>
          <AppTile><Mcafee /></AppTile>
          <AppTile $bg="#46292c"><Webex /><Dot $w={8} $c="#ff98a4" /></AppTile>
          <AppTile><Chrome /><Dot $w={8} $c="#9b9b9e" /></AppTile>
          <AppTile><Xampp s={30} /><Dot $w={8} $c="#9b9b9e" /></AppTile>
        </Apps>
        <Tray>
          <Stroke w={16} h={9} sw={1.400} d="M.8 8.200 8 1l7.200 7.200" />
          <Push $l={12}><Sync /></Push>
          <Push $l={10}><CloudError /></Push>
          <Push $l={18}>
            <Stack $w={30} $align="center"><Fit w={28}>ENG</Fit><Fit w={14}>IN</Fit></Stack>
          </Push>
          <Push $l={22}>
            <svg width="20" height="15" viewBox="0 0 20 15" fill="none" stroke="#fff" strokeWidth="1.500" strokeLinecap="round">
              <path d="M.8 5a13 13 0 0 1 18.400 0M3.500 8a9.300 9.300 0 0 1 13 0M6.300 10.700a5.300 5.300 0 0 1 7.400 0" />
              <circle cx="10" cy="13" r="1.300" fill="#fff" stroke="none" />
            </svg>
          </Push>
          <Push $l={10}><Stroke w={20} h={17} sw={1.300} d="M1 6h3l4.500-4.500v14L4 11H1zM11.500 5.500c1.500 1.700 1.500 4.300 0 6M14 3.500c2.500 2.700 2.500 7.300 0 10M16.500 1.500c3.700 4 3.700 10 0 14" /></Push>
          <Push $l={10}><Battery /></Push>
          <Push $l={18}>
            <Stack $w={78} $align="right"><Fit w={34}>19:24</Fit><Fit w={77}>27-03-2023</Fit></Stack>
          </Push>
          <Notice>3</Notice>
        </Tray>
      </Taskbar>
    </Screen>
  );
}
